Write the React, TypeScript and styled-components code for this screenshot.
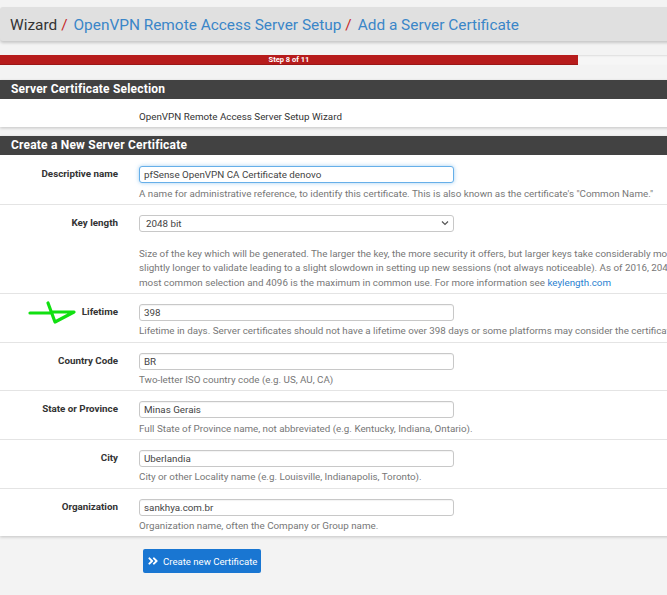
import React from "react";
import styled, { createGlobalStyle } from "styled-components";
import { FaAngleDoubleRight } from "react-icons/fa";

const Global = createGlobalStyle`
  html, body { margin: 0; padding: 0; background: #f3f3f3; overflow: hidden; }
  body { font-family: Roboto, "Liberation Sans", Arial, sans-serif; color: #333; }
  * { box-sizing: border-box; }
`;

const Page = styled.div`
  width: 900px;
  padding-top: 7px;
`;

const Header = styled.div`
  height: 34px;
  background: #e0e0e0;
  border-radius: 3px;
  box-shadow: 0 2px 3px rgba(0, 0, 0, 0.18);
  padding: 2px 0 0 10px;
  font-size: 15.4px;
  line-height: 32px;
  white-space: nowrap;
`;

const Crumb = styled.span<{ $link?: boolean }>`
  color: ${(p) => (p.$link ? "#3a86c8" : "#333")};
`;

const Sep = styled.span`
  color: #c62828;
  padding: 0 6px 0 4px;
`;

const Track = styled.div`
  margin-top: 14px;
  height: 10px;
  background: #f6f6f6;
  box-shadow: inset 0 1px 2px rgba(0, 0, 0, 0.1);
`;

const Bar = styled.div`
  height: 10px;
  background: #b71c1c;
  color: #fff;
  font-size: 7.5px;
  font-weight: 700;
  line-height: 10px;
  text-align: center;
  box-shadow: inset 0 -1px 0 rgba(0, 0, 0, 0.15);
`;

const Panel = styled.section<{ $gap: number }>`
  margin-top: ${(p) => p.$gap}px;
  background: #fff;
  box-shadow: 0 1px 3px rgba(0, 0, 0, 0.2);
`;

const PanelTitle = styled.h2`
  margin: 0;
  height: 19px;
  background: #424242;
  color: #fff;
  font-size: 12px;
  font-weight: 700;
  letter-spacing: 0.2px;
  line-height: 19px;
  padding-left: 11px;
`;

const PanelNote = styled.div`
  padding: 11px 0 3px 139px;
  font-size: 9.8px;
  line-height: 14px;
  color: #333;
`;

const Row = styled.div`
  position: relative;
  display: grid;
  grid-template-columns: 118px 315px;
  column-gap: 21px;
  align-items: start;
  border-top: 1px solid #e4e4e4;
  padding: 10px 0 2.7px;
  &:first-of-type {
    border-top-color: transparent;
  }
`;

const Label = styled.label`
  text-align: right;
  font-size: 9.8px;
  font-weight: 700;
  line-height: 16px;
  color: #333;
  white-space: nowrap;
`;

const Field = styled.div`
  display: flex;
  flex-direction: column;
`;

const Input = styled.input<{ $focus?: boolean }>`
  display: block;
  width: 315px;
  height: 17px;
  border: 1px solid ${(p) => (p.$focus ? "#66afe9" : "#c8c8c8")};
  border-radius: 3px;
  padding: 0 4px;
  font-family: Roboto, "Liberation Sans", Arial, sans-serif;
  font-size: 9.8px;
  color: #444;
  background: #fff;
  box-shadow: ${(p) =>
    p.$focus ? "0 0 4px rgba(102,175,233,0.6)" : "inset 0 1px 1px rgba(0,0,0,0.05)"};
  outline: none;
`;

const SelectWrap = styled.div`
  position: relative;
  width: 315px;
  height: 17px;
`;

const Select = styled.select`
  display: block;
  appearance: none;
  width: 315px;
  height: 17px;
  border: 1px solid #c8c8c8;
  border-radius: 3px;
  padding: 0 6px;
  font-family: Roboto, "Liberation Sans", Arial, sans-serif;
  font-size: 9.8px;
  color: #444;
  background: #fff;
  outline: none;
`;

const Chevron = styled.svg`
  position: absolute;
  right: 5px;
  top: 5px;
  pointer-events: none;
`;

const Help = styled.div<{ $gap?: number }>`
  margin-top: ${(p) => p.$gap ?? 3.5}px;
  font-size: 9.8px;
  line-height: 14.5px;
  color: #777;
  white-space: nowrap;
`;

const HelpLink = styled.a`
  color: #2a7fd0;
  text-decoration: none;
`;

const Mark = styled.svg`
  position: absolute;
  left: 0;
  top: 0;
`;

const Actions = styled.div`
  padding: 13px 0 0 143px;
`;

const Button = styled.button`
  display: inline-flex;
  align-items: center;
  gap: 4px;
  height: 24px;
  padding: 0 4px 0 4px;
  border: none;
  border-radius: 2px;
  background: #1976d2;
  color: #fff;
  font-family: Roboto, "Liberation Sans", Arial, sans-serif;
  font-size: 9.6px;
  cursor: pointer;
`;

type F = { label: string; value: string; help: string; focus?: boolean; mark?: boolean };

const fields: F[] = [
  { label: "Country Code", value: "BR", help: "Two-letter ISO country code (e.g. US, AU, CA)" },
  {
    label: "State or Province",
    value: "Minas Gerais",
    help: "Full State of Province name, not abbreviated (e.g. Kentucky, Indiana, Ontario).",
  },
  {
    label: "City",
    value: "Uberlandia",
    help: "City or other Locality name (e.g. Louisville, Indianapolis, Toronto).",
  },
  {
    label: "Organization",
    value: "sankhya.com.br",
    help: "Organization name, often the Company or Group name.",
  },
];

function TextRow({ label, value, help, focus, mark }: F) {
  return (
    <Row>
      {mark && (
        <Mark width="80" height="32" viewBox="0 0 80 32">
          <path
            d="M30 19 L52 19 M48 9 L55 28 L74 18 L52 18"
            fill="none"
            stroke="#11e011"
            strokeWidth="3.2"
            strokeLinecap="round"
            strokeLinejoin="round"
          />
        </Mark>
      )}
      <Label>{label}</Label>
      <Field>
        <Input $focus={focus} defaultValue={value} />
        <Help>{help}</Help>
      </Field>
    </Row>
  );
}

export default function App() {
  return (
    <Page>
      <Global />
      <Header>
        <Crumb>Wizard</Crumb>
        <Sep>/</Sep>
        <Crumb $link>OpenVPN Remote Access Server Setup</Crumb>
        <Sep>/</Sep>
        <Crumb $link>Add a Server Certificate</Crumb>
      </Header>
      <Track>
        <Bar style={{ width: "578px" }}>Step 8 of 11</Bar>
      </Track>

      <Panel $gap={15}>
        <PanelTitle>Server Certificate Selection</PanelTitle>
        <PanelNote>OpenVPN Remote Access Server Setup Wizard</PanelNote>
      </Panel>

      <Panel $gap={9}>
        <PanelTitle>Create a New Server Certificate</PanelTitle>
        <TextRow
          label="Descriptive name"
          value="pfSense OpenVPN CA Certificate denovo"
          focus
          help={'A name for administrative reference, to identify this certificate. This is also known as the certificate\'s "Common Name."'}
        />
        <Row>
          <Label>Key length</Label>
          <Field>
            <SelectWrap>
              <Select defaultValue="2048">
                <option value="2048">2048 bit</option>
              </Select>
              <Chevron width="8" height="6" viewBox="0 0 8 6">
                <path d="M1 1.5 L4 4.5 L7 1.5" fill="none" stroke="#555" strokeWidth="1.2" />
              </Chevron>
            </SelectWrap>
            <Help $gap={15}>
              Size of the key which will be generated. The larger the key, the more security it offers, but larger keys take considerably more time to generate, and take
              <br />
              slightly longer to validate leading to a slight slowdown in setting up new sessions (not always noticeable). As of 2016, 2048 bit is the minimum and
              <br />
              most common selection and 4096 is the maximum in common use. For more information see{" "}
              <HelpLink href="#">keylength.com</HelpLink>
            </Help>
          </Field>
        </Row>
        <TextRow
          label="Lifetime"
          value="398"
          mark
          help="Lifetime in days. Server certificates should not have a lifetime over 398 days or some platforms may consider the certificate invalid."
        />
        {fields.map((f) => (
          <TextRow key={f.label} {...f} />
        ))}
      </Panel>

      <Actions>
        <Button>
          <FaAngleDoubleRight size={12} />
          Create new Certificate
        </Button>
      </Actions>
    </Page>
  );
}
